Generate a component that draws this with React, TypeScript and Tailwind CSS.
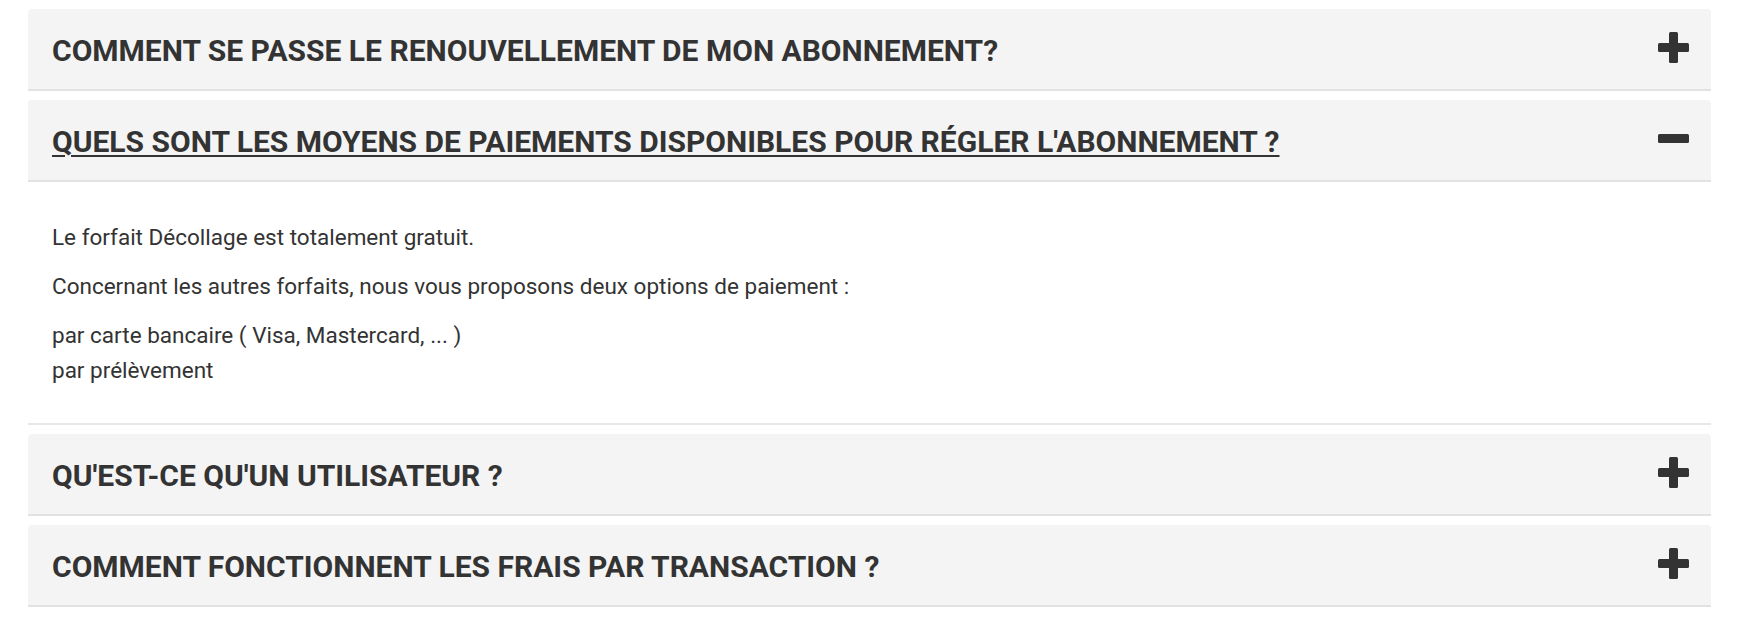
import { useState } from "react";

interface FaqItem {
    question: string;
    answer?: string[][];
}

const faqs: FaqItem[] = [
    { question: "COMMENT SE PASSE LE RENOUVELLEMENT DE MON ABONNEMENT?" },
    {
        question: "QUELS SONT LES MOYENS DE PAIEMENTS DISPONIBLES POUR RÉGLER L'ABONNEMENT ?",
        answer: [
            ["Le forfait Décollage est totalement gratuit."],
            ["Concernant les autres forfaits, nous vous proposons deux options de paiement :"],
            ["par carte bancaire ( Visa, Mastercard, ... )", "par prélèvement"],
        ],
    },
    { question: "QU'EST-CE QU'UN UTILISATEUR ?" },
    { question: "COMMENT FONCTIONNENT LES FRAIS PAR TRANSACTION ?" },
];

function PlusIcon() {
    return (
        <svg width="31" height="31" viewBox="0 0 31 31" className="shrink-0 mb-[4px]">
            <rect x="11" y="0" width="9" height="31" rx="1.5" fill="#333333" />
            <rect x="0" y="11" width="31" height="9" rx="1.5" fill="#333333" />
        </svg>
    );
}

function MinusIcon() {
    return (
        <svg width="31" height="31" viewBox="0 0 31 31" className="shrink-0 mb-[4px]">
            <rect x="0" y="11" width="31" height="9" rx="1.5" fill="#333333" />
        </svg>
    );
}

export default function App() {
    const [open, setOpen] = useState<number | null>(1);

    return (
        <div className="min-h-[636px] bg-white pt-[9px]" style={{ fontFamily: "Roboto, 'Liberation Sans', sans-serif" }}>
            <div className="ml-[28px] w-[1683px] flex flex-col gap-[9px]">
                {faqs.map((item, index) => (
                    <div key={index}>
                        <button
                            onClick={() => setOpen(open === index ? null : index)}
                            className="w-full h-[82px] flex items-center justify-between pl-[24px] pr-[22px] bg-[#f4f4f4] rounded-t-[4px] border-b-2 border-[#e2e2e2] text-left"
                        >
                            <span
                                className={`pt-[3px] text-[30px] font-bold text-[#333333] leading-none ${open === index ? "underline decoration-2 underline-offset-[3px]" : ""}`}
                            >
                                {item.question}
                            </span>
                            {open === index ? <MinusIcon /> : <PlusIcon />}
                        </button>
                        {open === index && item.answer && (
                            <div className="bg-white border-b-2 border-[#e8e8e8] pl-[24px] pt-[38px] pb-[35px] text-[22.5px] leading-[35px] text-[#333333]">
                                {item.answer.map((lines, i) => (
                                    <p key={i} className="mb-[14px] last:mb-0">
                                        {lines.map((line, j) => (
                                            <span key={j} className="block">{line}</span>
                                        ))}
                                    </p>
                                ))}
                            </div>
                        )}
                    </div>
                ))}
            </div>
        </div>
    );
}
